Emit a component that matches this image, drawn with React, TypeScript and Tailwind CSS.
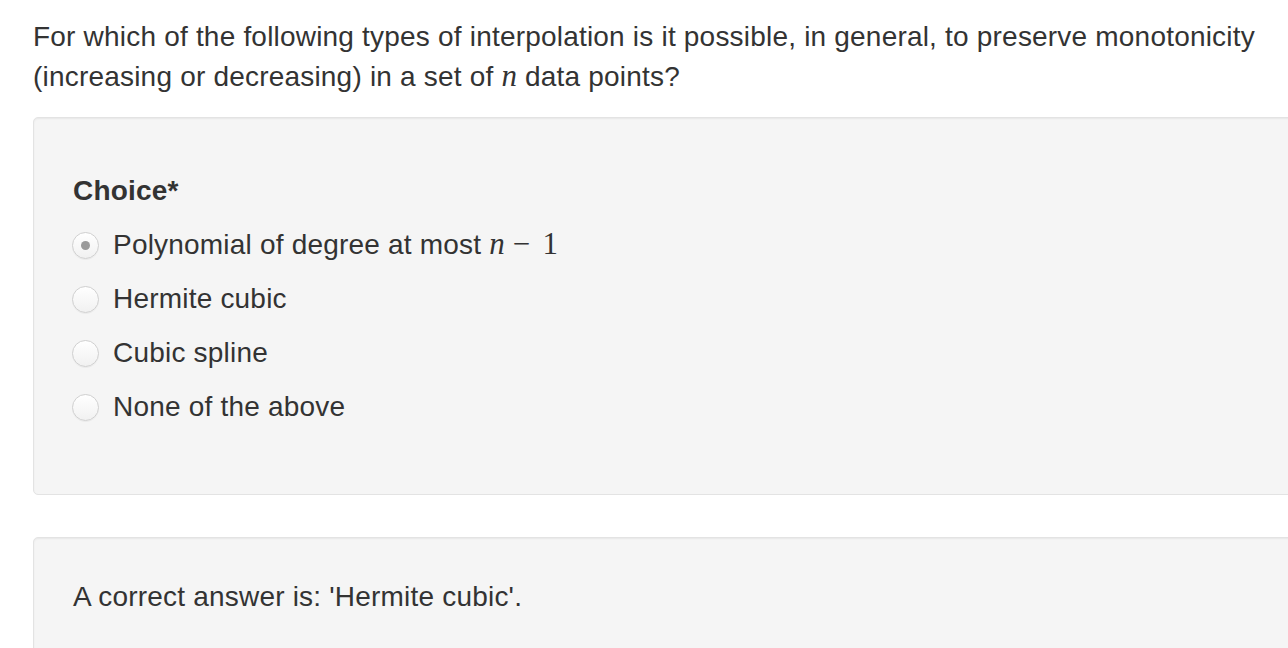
import React from 'react';

const options = [
  { label: 'Polynomial of degree at most', math: true, selected: true },
  { label: 'Hermite cubic', math: false, selected: false },
  { label: 'Cubic spline', math: false, selected: false },
  { label: 'None of the above', math: false, selected: false },
];

const serif = { fontFamily: '"Liberation Serif", "DejaVu Serif", serif' };

const MathN: React.FC = () => (
  <span className="italic text-[31px] leading-none tracking-normal" style={serif}>
    n
  </span>
);

const Radio: React.FC<{ selected: boolean }> = ({ selected }) => (
  <span className="flex items-center justify-center w-[27px] h-[27px] rounded-full border border-[#d0d0d0] bg-gradient-to-b from-[#ffffff] to-[#f1f1f1] shadow-[0_1px_0_rgba(0,0,0,0.04)]">
    {selected && <span className="block w-[9px] h-[9px] rounded-full bg-[#9a9a9a]" />}
  </span>
);

const App: React.FC = () => {
  return (
    <div
      className="min-h-screen bg-white text-[#333333] text-[28px] leading-[40px] tracking-[0.2px] pl-[33px] pt-[17px] overflow-hidden"
      style={{ fontFamily: '"Liberation Sans", Arial, sans-serif' }}
    >
      <p className="w-[1250px]">
        For which of the following types of interpolation is it possible, in general, to preserve monotonicity
        (increasing or decreasing) in a set of <MathN /> data points?
      </p>

      <div className="mt-[20px] w-[1300px] bg-[#f5f5f5] border border-[#e3e3e3] rounded-[5px] shadow-[inset_0_1px_2px_rgba(0,0,0,0.06)] pl-[39px] pt-[53px] pb-[60px]">
        <div className="font-bold">Choice*</div>
        <div className="mt-[7px]">
          {options.map((o) => (
            <label key={o.label} className="flex items-center h-[54px]">
              <span className="ml-[-1px] mr-[14px]">
                <Radio selected={o.selected} />
              </span>
              <span>
                {o.label}
                {o.math && (
                  <>
                    {' '}
                    <MathN />
                    <span className="text-[31px] leading-none ml-[8px]" style={serif}>
                      −
                    </span>
                    <span className="text-[31px] leading-none ml-[12px]" style={serif}>
                      1
                    </span>
                  </>
                )}
              </span>
            </label>
          ))}
        </div>
      </div>

      <div className="mt-[42px] w-[1300px] h-[200px] bg-[#f5f5f5] border border-[#e3e3e3] rounded-[5px] shadow-[inset_0_1px_2px_rgba(0,0,0,0.06)] pl-[39px] pt-[39px]">
        A correct answer is: 'Hermite cubic'.
      </div>
    </div>
  );
};

export default App;
